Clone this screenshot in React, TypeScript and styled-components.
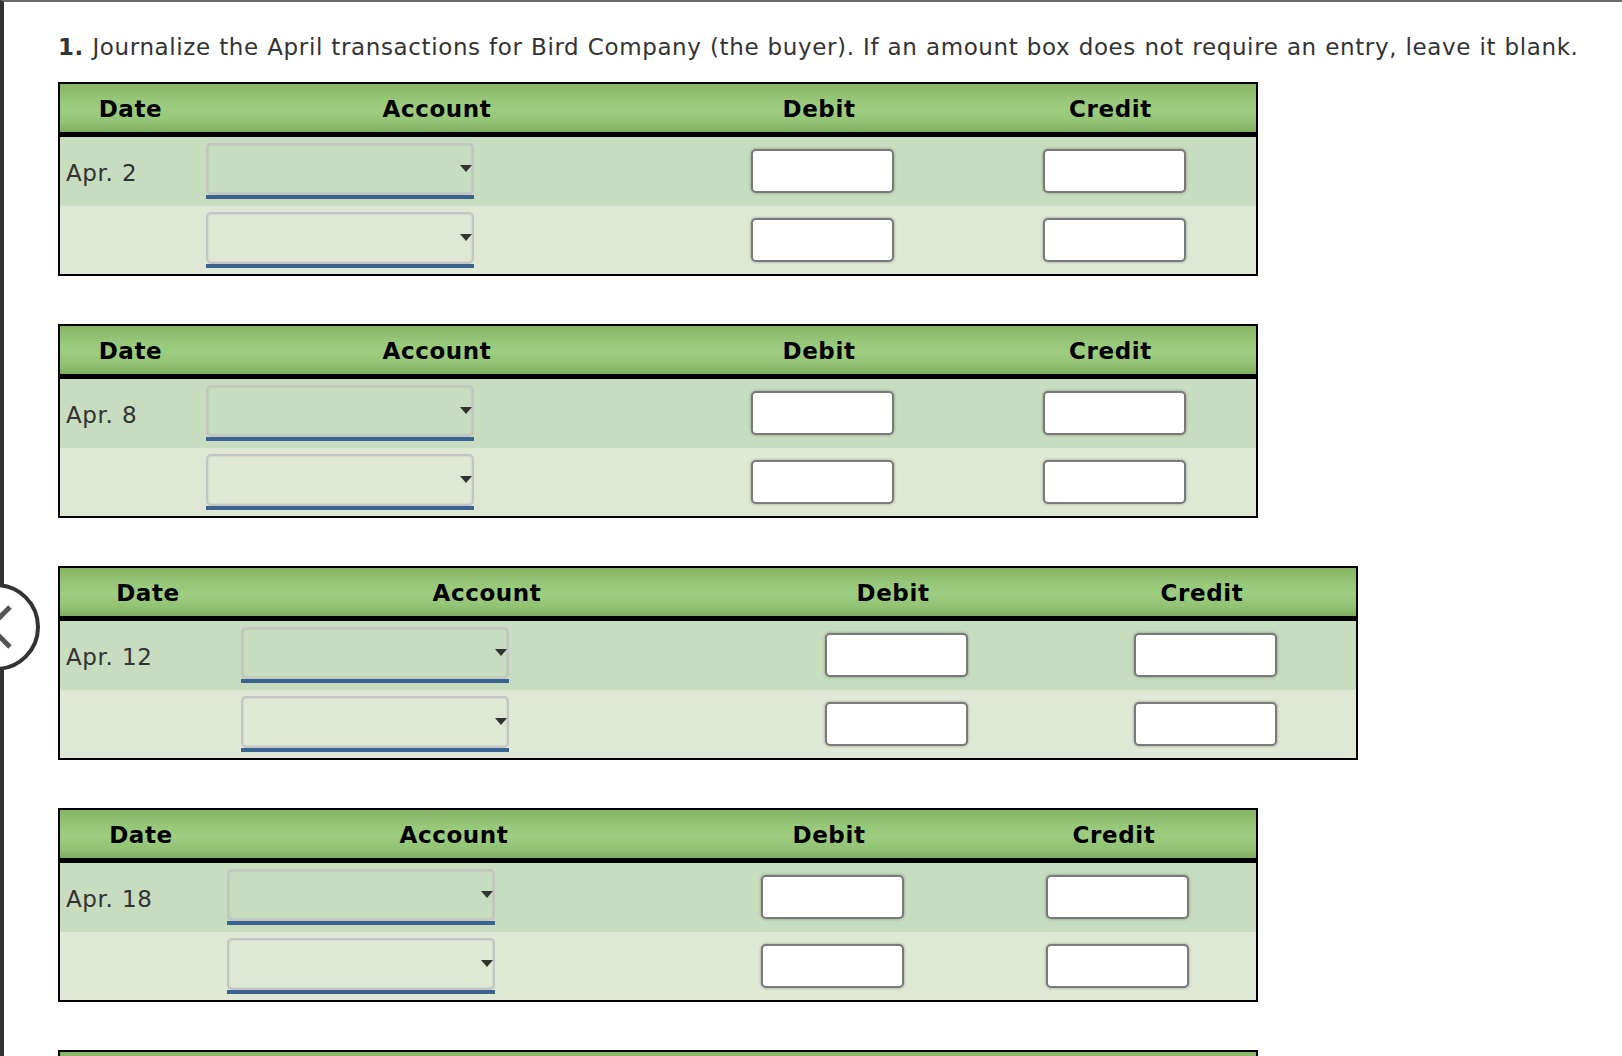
import styled, { createGlobalStyle } from 'styled-components';

const GlobalStyle = createGlobalStyle`
  html, body {
    margin: 0;
    padding: 0;
    overflow: hidden;
    background: #fff;
  }

  body {
    font-family: 'DejaVu Sans', Verdana, sans-serif;
  }
`;

const Shell = styled.div`
  position: relative;
`;

const Page = styled.div`
  box-sizing: border-box;
  min-height: 100vh;
  padding: 32px 0 0 54px;

  border-top: 2px solid #6c6c6c;
  border-left: 4px solid #333;

  color: #333;
  font-size: 23px;
  letter-spacing: 0.62px;
  word-spacing: 0.5px;
`;

const Title = styled.p`
  margin: 0 0 21px;
  line-height: 27px;
  white-space: nowrap;

  b {
    font-weight: bold;
  }
`;

const Journal = styled.div<{ width: number }>`
  box-sizing: border-box;
  width: ${(props) => props.width}px;
  margin-bottom: 48px;

  border: 2px solid #000;
`;

const HeaderRow = styled.div<{ cols: string }>`
  height: 48px;

  display: grid;
  grid-template-columns: ${(props) => props.cols};
  align-items: center;

  border-bottom: 5px solid #000;
  background: linear-gradient(#86b463 0%, #98c87a 35%, #9ecd81 55%, #92c274 80%, #80ae5f 100%);
`;

const HeaderCell = styled.div`
  padding-top: 2px;

  text-align: center;
  font-weight: bold;
  color: #000;
`;

const Row = styled.div<{ cols: string; shade: 'dark' | 'light' }>`
  height: 68.5px;

  display: grid;
  grid-template-columns: ${(props) => props.cols};
  align-items: center;

  background-color: ${(props) => (props.shade === 'dark' ? '#c8dcc0' : '#dfe8d4')};
`;

const DateCell = styled.div`
  padding: 4px 0 0 6px;
  white-space: nowrap;
`;

const AccountCell = styled.div`
  padding-left: 5px;
`;

const AmountCell = styled.div`
  padding-left: 7px;

  display: flex;
  justify-content: center;
`;

const SelectWrap = styled.div`
  position: relative;
  width: 268px;

  border-bottom: 4px solid #3b6391;
`;

const AccountSelect = styled.select`
  box-sizing: border-box;
  width: 100%;
  height: 52px;
  margin: 0;
  display: block;

  appearance: none;
  border: 2px solid #c4c4c4;
  border-radius: 5px;
  box-shadow: inset 0 0 2px rgba(0, 0, 0, 0.18);
  background: transparent;

  font: inherit;
  color: #333;
`;

const Caret = styled.span`
  position: absolute;
  top: 22px;
  right: 2px;

  width: 0;
  height: 0;
  border-left: 6px solid transparent;
  border-right: 6px solid transparent;
  border-top: 7px solid #333;

  pointer-events: none;
`;

const AmountInput = styled.input`
  box-sizing: border-box;
  width: 143px;
  height: 44px;
  margin: 0;

  border: 2px solid #7a7a7a;
  border-radius: 5px;
  box-shadow: 0 0 3px rgba(0, 0, 0, 0.35);
  background: #fff;

  font: inherit;
`;

const NavCircle = styled.button`
  position: absolute;
  left: -48px;
  top: 583px;

  box-sizing: border-box;
  width: 88px;
  height: 88px;
  padding: 0;

  border: 4px solid #333;
  border-radius: 50%;
  background: #fff;
`;

const Chevron = styled.svg`
  position: absolute;
  left: 0;
  top: 0;
`;

type Entry = { date: string; width: number; cols: string };

const entries: Entry[] = [
  { date: 'Apr. 2', width: 1200, cols: '141px 472px 292px 291px' },
  { date: 'Apr. 8', width: 1200, cols: '141px 472px 292px 291px' },
  { date: 'Apr. 12', width: 1300, cols: '176px 502px 310px 308px' },
  { date: 'Apr. 18', width: 1200, cols: '162px 464px 286px 284px' },
  { date: 'Apr. 28', width: 1200, cols: '141px 472px 292px 291px' },
];

function AccountPicker() {
  return (
    <SelectWrap>
      <AccountSelect defaultValue="">
        <option value=""></option>
      </AccountSelect>
      <Caret />
    </SelectWrap>
  );
}

function JournalTable({ entry }: { entry: Entry }) {
  const lines: ('dark' | 'light')[] = ['dark', 'light'];

  return (
    <Journal width={entry.width}>
      <HeaderRow cols={entry.cols}>
        <HeaderCell>Date</HeaderCell>
        <HeaderCell>Account</HeaderCell>
        <HeaderCell>Debit</HeaderCell>
        <HeaderCell>Credit</HeaderCell>
      </HeaderRow>
      {lines.map((shade, idx) => (
        <Row key={idx} cols={entry.cols} shade={shade}>
          <DateCell>{idx === 0 ? entry.date : ''}</DateCell>
          <AccountCell>
            <AccountPicker />
          </AccountCell>
          <AmountCell>
            <AmountInput type="text" />
          </AmountCell>
          <AmountCell>
            <AmountInput type="text" />
          </AmountCell>
        </Row>
      ))}
    </Journal>
  );
}

export default function App() {
  return (
    <>
      <GlobalStyle />
      <Shell>
        <Page>
          <Title>
            <b>1.</b> Journalize the April transactions for Bird Company (the buyer). If an amount box
            does not require an entry, leave it blank.
          </Title>
          {entries.map((entry, idx) => (
            <JournalTable key={idx} entry={entry} />
          ))}
        </Page>
        <NavCircle aria-label="Previous">
          <Chevron width="80" height="80" viewBox="0 0 80 80">
            <polyline points="54,20 34,40 54,60" fill="none" stroke="#555" strokeWidth="5" />
          </Chevron>
        </NavCircle>
      </Shell>
    </>
  );
}
